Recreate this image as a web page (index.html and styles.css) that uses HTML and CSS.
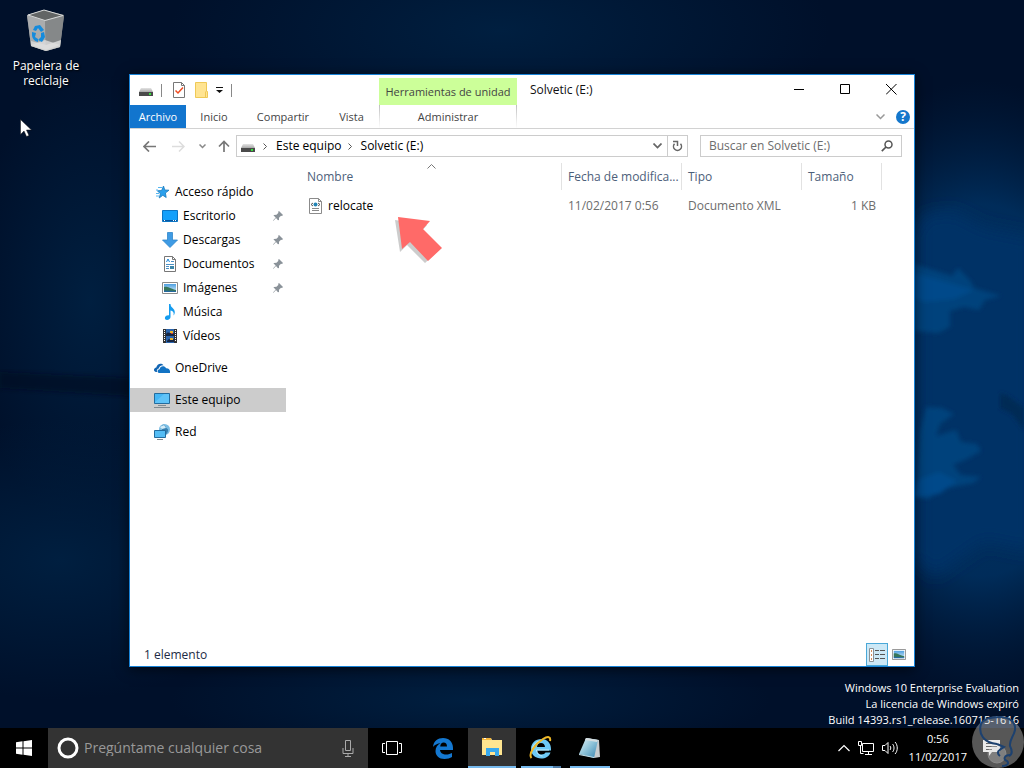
FILE: index.html
```html
<!DOCTYPE html>
<html lang="es">
<head>
<meta charset="utf-8">
<meta name="viewport" content="width=device-width, initial-scale=1">
<title>Solvetic (E:)</title>
<link rel="stylesheet" href="styles.css">
</head>
<body>
<svg class="defs" aria-hidden="true">
  <defs>
    <linearGradient id="driveTop" x1="0" y1="0" x2="0" y2="1"><stop offset="0" stop-color="#e4e4e4"/><stop offset="1" stop-color="#a9a9a9"/></linearGradient>
    <linearGradient id="sky" x1="0" y1="0" x2="0" y2="1"><stop offset="0" stop-color="#4d9fe0"/><stop offset="1" stop-color="#d9eef9"/></linearGradient>
    <symbol id="drive" viewBox="0 0 14 8"><path d="M2 0h10l2 4H0z" fill="url(#driveTop)"/><path d="M0 4h14v4H0z" fill="#4a4a4a"/><path d="M10 5h2v2h-2z" fill="#35e03c"/></symbol>
    <symbol id="pin" viewBox="0 0 10 10"><path d="M6 0l4 4-1 1-1-.3-2 2L6 9 5 9.300 3 7 .5 9.800 0 9.500 2.700 6.500.5 4.500 1 4l2.500-.3 2-2L5 1z" fill="#8a9299"/></symbol>
    <symbol id="photo" viewBox="0 0 16 12"><path d="M.5.500h15v11H.5z" fill="#fff" stroke="#8a8a8a"/><path d="M2 2h12v8H2z" fill="url(#sky)"/><path d="M2 5c3-1 5 1 12 3v1H2z" fill="#37765a"/><path d="M2 8.500l12 .5V10H2z" fill="#2469a0"/></symbol>
  </defs>
</svg>
<main class="desktop">
  <svg class="wallpaper" viewBox="0 0 1024 728" preserveAspectRatio="none" aria-hidden="true">
    <defs>
      <radialGradient id="glow"><stop offset="0" stop-color="#003366"/><stop offset=".6" stop-color="#003162" stop-opacity=".85"/><stop offset="1" stop-color="#002044" stop-opacity="0"/></radialGradient>
      <radialGradient id="haze"><stop offset="0" stop-color="#001f40"/><stop offset="1" stop-color="#001f40" stop-opacity="0"/></radialGradient>
      <filter id="soft"><feGaussianBlur stdDeviation="2"/></filter>
      <filter id="edge"><feGaussianBlur stdDeviation="8"/></filter>
    </defs>
    <path d="M0 0h1024v728H0z" fill="#00102a"/>
    <ellipse cx="500" cy="30" rx="330" ry="120" fill="url(#haze)"/>
    <ellipse cx="90" cy="300" rx="120" ry="230" fill="url(#haze)"/>
    <ellipse cx="60" cy="560" rx="220" ry="140" fill="url(#haze)"/>
    <ellipse cx="470" cy="700" rx="300" ry="60" fill="url(#haze)"/>
    <path d="M0 372l130 6v18L0 388z" fill="#000b20" filter="url(#soft)" opacity=".6"/>
    <ellipse cx="980" cy="390" rx="190" ry="310" fill="url(#glow)"/>
    <path d="M914 235l10-20 30-4 30 16 50 10v315l-50-10-50 35-20-20z" fill="#003366" filter="url(#edge)"/>
    <g filter="url(#soft)">
      <path d="M914 264l38 12 6-8 12 12 4 8 27 8-16 4-6 10-15-3-14 4v16l-12 6-24-2-1-32z" fill="#00437c"/>
      <path d="M914 273l60 17-20 9-30 3-10-4z" fill="#004a8a"/>
      <path d="M920 432l6-25 16 1 12 6-14 10-4 12 20-6 5 12 16 2 4 7-14 8-14 6 8 10 20 2-8 6-30 6-15 10-12-2z" fill="#00437c"/>
      <path d="M917 480l22-8 18 9-18 13-25 3z" fill="#004a8a"/>
    </g>
    <path d="M1000 393l8 3 16 12v22l-12-16-12-6z" fill="#002a55" filter="url(#soft)"/>
  </svg>

  <a class="bin" href="#papelera">
    <svg width="40" height="44" viewBox="0 0 40 44" aria-hidden="true">
      <path d="M1 6l17-5 20 5-4 32-14 4-15-5z" fill="#8e9091"/>
      <path d="M1 6l18 6 1 30-15-5z" fill="#aaacad"/>
      <path d="M19 12l19-5-4 31-14 4z" fill="#858889"/>
      <path d="M2 6l16-5 19 5.500-18 5z" fill="#626565" stroke="#d7d9d9"/>
      <path d="M5 32l15 4v6L5 37zM20 36l15-5-1 7-14 4z" fill="#d0d1d1"/>
      <path d="M5 36l14-5 15 5-14 5z" fill="#dedede" opacity=".8"/>
      <path d="M9 17l5-1 4 5-3 2-3-4-2 3-3-1zM6 23l4 1-1 4 3 2v3c-4-1-6-4-6-7zM15 24l3-1 1 5-3 5-4-2 3-3z" fill="#168bdc"/>
    </svg>
    <span>Papelera de reciclaje</span>
  </a>
  <svg class="pointer" width="12" height="18" viewBox="0 0 12 18" aria-hidden="true"><path d="M.5.500v15l3.500-3.500 2.500 5.500 2.500-1-2.500-5.500h5z" fill="#fff" stroke="#111" stroke-width=".5"/></svg>

  <section class="window" aria-label="Solvetic (E:)">
    <header class="titlebar">
      <div class="quick">
        <svg width="14" height="8" aria-hidden="true"><use href="#drive"/></svg>
        <i class="rule"></i>
        <button aria-label="Propiedades"><svg width="12" height="16" viewBox="0 0 12 16"><path d="M.5.500h8l3 3v12H.5z" fill="#fff" stroke="#777"/><path d="M8.500.5v3h3" fill="none" stroke="#777"/><path d="M2.500 8.500L5 11l5-5.500" fill="none" stroke="#ef4b20" stroke-width="1.500"/></svg></button>
        <button aria-label="Nueva carpeta"><svg width="13" height="16" viewBox="0 0 13 16"><path d="M.5.500h11v9h1v6H.5z" fill="#ffe492" stroke="#efc956"/><path d="M10.500 15V9.500" stroke="#efc956"/></svg></button>
        <button aria-label="Personalizar"><svg width="7" height="6" viewBox="0 0 7 6"><path d="M0 0h7v1H0zM0 3h7L3.500 6z" fill="#111"/></svg></button>
        <i class="rule"></i>
      </div>
      <div class="context">Herramientas de unidad</div>
      <h1>Solvetic (E:)</h1>
      <div class="controls">
        <button aria-label="Minimizar"><svg width="11" height="11" viewBox="0 0 11 11"><path d="M0 5.500h10" stroke="#000"/></svg></button>
        <button aria-label="Maximizar"><svg width="11" height="11" viewBox="0 0 11 11"><path d="M.5.500h9v9h-9z" fill="none" stroke="#000"/></svg></button>
        <button aria-label="Cerrar"><svg width="11" height="11" viewBox="0 0 11 11"><path d="M0 0l10.500 10.500M10.500 0L0 10.500" stroke="#000"/></svg></button>
      </div>
    </header>

    <nav class="tabs" aria-label="Cinta">
      <button class="file">Archivo</button>
      <button>Inicio</button>
      <button>Compartir</button>
      <button>Vista</button>
      <button class="manage">Administrar</button>
      <div class="help">
        <button aria-label="Expandir la cinta"><svg width="9" height="6" viewBox="0 0 9 6"><path d="M.5.500l4 4 4-4" fill="none" stroke="#999" stroke-width="1.500"/></svg></button>
        <button class="round" aria-label="Ayuda">?</button>
      </div>
    </nav>

    <div class="location">
      <div class="arrows">
        <button aria-label="Atrás"><svg width="13" height="11" viewBox="0 0 13 11"><path d="M13 5.500H1.500M6 .5l-5 5 5 5" fill="none" stroke="#777" stroke-width="1.700"/></svg></button>
        <button aria-label="Adelante"><svg width="13" height="11" viewBox="0 0 13 11"><path d="M0 5.500h11.500M7 .5l5 5-5 5" fill="none" stroke="#ddd" stroke-width="1.500"/></svg></button>
        <button aria-label="Recientes"><svg width="7" height="5" viewBox="0 0 7 5"><path d="M.5.500l3 3 3-3" fill="none" stroke="#888" stroke-width="1.500"/></svg></button>
        <button aria-label="Subir"><svg width="12" height="12" viewBox="0 0 12 12"><path d="M6 12V1.500M1 6.500l5-5 5 5" fill="none" stroke="#777" stroke-width="1.700"/></svg></button>
      </div>
      <div class="address">
        <svg width="14" height="8" aria-hidden="true"><use href="#drive"/></svg>
        <svg class="sep" width="4" height="7" viewBox="0 0 4 7"><path d="M.5.500l3 3-3 3" fill="none" stroke="#555"/></svg>
        <a href="#equipo">Este equipo</a>
        <svg class="sep" width="4" height="7" viewBox="0 0 4 7"><path d="M.5.500l3 3-3 3" fill="none" stroke="#555"/></svg>
        <a href="#e">Solvetic (E:)</a>
        <button class="drop" aria-label="Ubicaciones anteriores"><svg width="9" height="6" viewBox="0 0 9 6"><path d="M.5.500l4 4 4-4" fill="none" stroke="#666" stroke-width="1.700"/></svg></button>
        <button class="reload" aria-label="Actualizar"><svg width="11" height="12" viewBox="0 0 11 12"><path d="M8.500 3.800A4 4 0 1 1 2.500 3.800" fill="none" stroke="#666" stroke-width="1.500"/><path d="M1 1.500h4.500V6" fill="none" stroke="#666" stroke-width="1.500"/></svg></button>
      </div>
      <label class="search">
        <input type="search" aria-label="Buscar" placeholder="Buscar en Solvetic (E:)">
        <svg width="12" height="12" viewBox="0 0 12 12" aria-hidden="true"><circle cx="7.500" cy="4.500" r="3.500" fill="none" stroke="#555" stroke-width="1.500"/><path d="M5 7L.8 11.200" stroke="#555" stroke-width="1.700"/></svg>
      </label>
    </div>

    <div class="content">
      <nav class="tree" aria-label="Panel de navegación">
        <a href="#rapido"><svg width="16" height="16" viewBox="0 0 16 16"><path d="M9.500 2l1.300 4 4.200.2-3.600 2.800.8 4.500-3.400-2.200-3.600 2.700 1.200-4.200-3-3 4.200-.3z" fill="#2ba0ec" stroke="#1679bd" stroke-width=".8"/><path d="M4 3.500h4M2 6h2M2 9.500h3M2 12h3" stroke="#54b6f0"/></svg>Acceso rápido</a>
        <ul>
          <li><a href="#escritorio"><svg width="16" height="16" viewBox="0 0 16 16"><path d="M.5 2.500h15v11H.5z" fill="#14a0fb" stroke="#0c75c4"/><path d="M1 12.500h14" stroke="#0756a0"/><path d="M2 12.500h1M11 12.500h1M13 12.500h1" stroke="#fff"/></svg>Escritorio</a><svg class="pin"><use href="#pin"/></svg></li>
          <li><a href="#descargas"><svg width="16" height="16" viewBox="0 0 16 16"><path d="M5.500.500h5v7.500h5L8 15.500.5 8h5z" fill="#3f9be4" stroke="#2f86cb" stroke-width=".8"/></svg>Descargas</a><svg class="pin"><use href="#pin"/></svg></li>
          <li><a href="#documentos"><svg width="16" height="16" viewBox="0 0 16 16"><path d="M2.500.500h8l3 3v12h-11z" fill="#fff" stroke="#777"/><path d="M10.500.5v3h3" fill="none" stroke="#777"/><path d="M4.500 6l1.500-3 1.500 3" fill="none" stroke="#1684d8"/><path d="M9 5.500h3M4 8.500h8M4 10.500h3M4 12.500h3" stroke="#4b90c5"/><path d="M8 10h4v3H8z" fill="#3c86a8"/></svg>Documentos</a><svg class="pin"><use href="#pin"/></svg></li>
          <li><a href="#imagenes"><svg width="16" height="12"><use href="#photo"/></svg>Imágenes</a><svg class="pin"><use href="#pin"/></svg></li>
          <li><a href="#musica"><svg width="16" height="16" viewBox="0 0 16 16"><path d="M7 0h1.500c0 4 4.500 4 4.300 8.500-.2 1.500-.8 2.500-1.300 3 .8-3-.5-4.500-3-5V13c0 1.600-1.600 3-3.400 3C3.500 16 2.500 15 3 13.300 3.500 12 5.500 11 7 11.500z" fill="#159cef"/></svg>Música</a></li>
          <li><a href="#videos"><svg width="16" height="16" viewBox="0 0 16 16"><path d="M1 1h14v14H1z" fill="#333"/><path d="M4 1h8v14H4z" fill="#2d66ad"/><path d="M4 6c3-4 4 1 8-1v3H4zM5 13c2-4 4 0 7-2v3H5z" fill="#162744"/><path d="M8 3h3v2H8zM8 10h3v2H8z" fill="#ecb52b"/><path d="M9 5h2v1H9z" fill="#ce3c2a"/><path d="M2.500 2v12M13.500 2v12" stroke="#fff" stroke-dasharray="1 1"/></svg>Vídeos</a></li>
        </ul>
        <a href="#onedrive"><svg width="16" height="16" viewBox="0 0 16 16"><path d="M2 12C-1 11.500-.5 8 2.300 7.500 3 4 7 2.500 9.500 5.200 6.500 5 5 7 4.800 8.500 2.800 9 2.500 10.800 3.200 12z" fill="#1265b3"/><path d="M5 13c-2-.5-2-3.300.6-3.700C6 6 10.500 5 12 8.300c3-.3 4.500 2 4 4.700z" fill="#1273c4"/></svg>OneDrive</a>
        <a class="selected" href="#equipo"><svg width="16" height="16" viewBox="0 0 16 16"><path d="M.5 1.500h15v10H.5z" fill="#45b6f4" stroke="#236c9e"/><path d="M1 10l9-8h5v9H1z" fill="#71cbfa" opacity=".6"/><path d="M4 13.500h8M0 15.500h16" stroke="#808a90"/></svg>Este equipo</a>
        <a href="#red"><svg width="16" height="16" viewBox="0 0 16 16"><circle cx="10.500" cy="5.500" r="5.500" fill="#7abde4"/><path d="M9 .5c3 1 2 3 4 4s1 4-1 6l-3-4c-2-1-1-4 0-6z" fill="#357fb0"/><path d="M6 3l4-2 2 3-4 1z" fill="#d5edf8"/><path d="M.5 6.500h11v7H.5z" fill="#54bdf5" stroke="#236c9e"/><path d="M3 15.500h6" stroke="#808a90"/></svg>Red</a>
      </nav>

      <div class="files">
        <table>
          <colgroup><col class="c-name"><col class="c-date"><col class="c-type"><col class="c-size"></colgroup>
          <thead><tr>
            <th scope="col">Nombre<svg class="sort" width="9" height="5" viewBox="0 0 9 5"><path d="M.5 4.500l4-4 4 4" fill="none" stroke="#777"/></svg></th>
            <th scope="col">Fecha de modifica...</th><th scope="col">Tipo</th><th scope="col">Tamaño</th>
          </tr></thead>
          <tbody><tr>
            <td><span class="name"><svg width="16" height="16" viewBox="0 0 16 16"><path d="M2.500.500h9l3 3v12h-12z" fill="#fff" stroke="#8b8b8b"/><path d="M11.500.5v3h3" fill="none" stroke="#8b8b8b"/><path d="M6 5L4 6.500 6 8M11 5l2 1.500L11 8" fill="none" stroke="#555"/><circle cx="8.500" cy="6.500" r="2" fill="#2384b5"/><path d="M5 10.500h7M5 12.500h7" stroke="#888"/></svg>relocate</span></td>
            <td>11/02/2017 0:56</td><td>Documento XML</td><td class="size">1 KB</td>
          </tr></tbody>
        </table>
        <svg class="callout" width="50" height="52" viewBox="0 0 50 52" aria-hidden="true"><path d="M4 3l32 5-7 8 18 18-13 12-18-18-7 7z" fill="#999" opacity=".5" transform="translate(-3 3)"/><path d="M4 3l32 4-7 8 19 19-14 13-18-19-8 7z" fill="#ff6a68"/></svg>
      </div>
    </div>

    <footer class="status">
      <span>1 elemento</span>
      <div class="views">
        <button class="active" aria-label="Detalles"><svg width="16" height="14" viewBox="0 0 16 14"><path d="M.5.500h4v13h-4z" fill="#fff" stroke="#8a9297"/><path d="M2 3h1M2 7h1M2 11h1" stroke="#c56724" stroke-width="1.500"/><path d="M6 2.500h4M11 2.500h5M6 6.500h4M11 6.500h5M6 10.500h4M11 10.500h5" stroke="#555"/></svg></button>
        <button aria-label="Iconos grandes"><svg width="14" height="11" viewBox="0 0 16 12" preserveAspectRatio="none"><use href="#photo"/></svg></button>
      </div>
    </footer>
  </section>

  <p class="build">Windows 10 Enterprise Evaluation<br>La licencia de Windows expiró<br>Build 14393.rs1_release.160715-1616</p>
</main>

<footer class="taskbar">
  <button class="task" aria-label="Inicio"><svg width="16" height="16" viewBox="0 0 16 16"><path d="M0 2.300L6.500 1.300v6.200H0zM7.500 1.200L16 0v7.500H7.500zM0 8.500h6.500v6.200L0 13.700zM7.500 8.500H16V16l-8.500-1.200z" fill="#fff"/></svg></button>
  <label class="cortana">
    <svg width="22" height="22" viewBox="0 0 22 22" aria-hidden="true"><circle cx="11" cy="11" r="9" fill="none" stroke="#fff" stroke-width="3"/></svg>
    <input type="text" aria-label="Cortana" placeholder="Pregúntame cualquier cosa">
    <svg width="12" height="17" viewBox="0 0 12 17" aria-hidden="true"><path d="M3.500.500h5v10h-5zM1 8v5.500h10V8M6 13.500v3M3 16.500h6" fill="none" stroke="#aaa"/></svg>
  </label>
  <div class="apps">
    <button class="task" aria-label="Vista de tareas"><svg width="20" height="14" viewBox="0 0 20 14"><path d="M4.500.500h11v13h-11zM3 2.500H.5v9H3M17 2.500h2.500v9H17" fill="none" stroke="#fff"/></svg></button>
    <button class="task edge" aria-label="Microsoft Edge"><svg width="22" height="22" viewBox="0 0 22 22"><path d="M1 10C1.500 4 6 1 11 1c6 0 10 4 10 10v2H8c.3 3 3 4.500 6 4.500 2.500 0 4.500-.7 6-1.500v4c-2 1.300-4.500 2-7.500 2C7 22 3.500 18.500 3.500 14c0-3.500 2-6.500 5-8C4.500 6.500 2 8.500 1 10zM8.200 9.500H15C15 7 13.700 5.500 11.700 5.500S8.500 7 8.200 9.500z" fill="#1478d1"/></svg></button>
    <button class="task current" aria-label="Explorador"><svg width="22" height="20" viewBox="0 0 22 20"><path d="M1 1h9l1 2h10v15H1z" fill="#ffe590"/><path d="M1 1h9v2H1z" fill="#f5b73c"/><path d="M3 1h2v1H3z" fill="#fff"/><path d="M5 19v-8h13v8h-4v-4H9v4z" fill="#38a9ee"/></svg></button>
    <button class="task open split" aria-label="Internet Explorer"><svg width="24" height="24" viewBox="0 0 24 24"><path d="M2 13C2 7 6.500 3 12.500 3S22 7.500 22 13v1.500H8c.3 2.500 2 4 4.500 4 2 0 3.300-1 4-2h5c-1.500 4-5 6-9.200 6C6.500 22.500 2 18.800 2 13zM8 11h8c-.2-2.500-1.700-4-4-4s-3.700 1.500-4 4z" fill="#6dc9f5"/><path d="M3.500 13C4 8 8 5 12 5M20 14H7.500c.5 4 3 6 6 6" fill="none" stroke="#c4eefd"/><path d="M2.500 22C-1 18 6 8 14 3c5-3 8-2.500 7 2" fill="none" stroke="#f0b928" stroke-width="2"/></svg></button>
    <button class="task open" aria-label="Bloc de notas"><svg width="24" height="22" viewBox="0 0 24 22"><defs><linearGradient id="pad" x2="1" y2="1"><stop offset="0" stop-color="#e7f7fb"/><stop offset=".5" stop-color="#8dc2d8"/><stop offset="1" stop-color="#3984b0"/></linearGradient></defs><path d="M9 1l12 2 1 17-6 1z" fill="#c8cccf"/><path d="M8 1l12 2-4 18L1 17z" fill="url(#pad)"/><path d="M8 1l12 2-1 2L7 3z" fill="#d5dde0"/><path d="M1 17l15 3v1L1 18z" fill="#c7e2eb"/></svg></button>
  </div>
  <div class="tray">
    <button aria-label="Mostrar iconos ocultos"><svg width="12" height="8" viewBox="0 0 12 8"><path d="M.5 7L6 1.500 11.500 7" fill="none" stroke="#fff" stroke-width="1.200"/></svg></button>
    <button aria-label="Red"><svg width="16" height="14" viewBox="0 0 16 14"><path d="M4.500 2.500h11v8h-11zM7 13.500h7M10.500 10.500v3M.5.500h3v4h-3zM2.500 4.500v8h3" fill="none" stroke="#fff"/></svg></button>
    <button aria-label="Volumen"><svg width="17" height="14" viewBox="0 0 17 14"><path d="M.5 4.500H3l3-3v11l-3-3H.5zM8 5c1 1 1 3 0 4M10.500 3c2 2 2 6 0 8M13 1c3 3 3 9 0 12" fill="none" stroke="#fff"/></svg></button>
    <time>0:56<br>11/02/2017</time>
    <button class="notes" aria-label="Notificaciones"><svg width="17" height="16" viewBox="0 0 17 16"><path d="M0 0h17v12H9l-3 4v-4H0z" fill="#fff"/><path d="M3 3.500h11M3 6.500h11M3 9.500h6" stroke="#222"/></svg></button>
  </div>
</footer>
<svg class="bulb" width="54" height="54" viewBox="0 0 54 54" aria-hidden="true"><circle cx="28" cy="28" r="26" fill="#cfcfcf" opacity=".42"/><circle cx="27" cy="40" r="9" fill="#ddd" opacity=".3" stroke="#fff"/><path d="M27 30C14 29 8 20 11 10 14 4 22 3 30 3c9 0 16 5 15 13-1 6-6 10-5 16 2 4 3 8-1 10M27 30l7 3-6 4M34 33c-6 3-8 6-4 9M40 41c-6 0-7 5-3 6 3 3-1 5-5 5" fill="none" stroke="#1d416f" stroke-width="2"/></svg>
</body>
</html>
```
FILE: styles.css
```css
* { box-sizing: border-box; }
body {
  margin: 0;
  min-height: 100vh;
  display: grid;
  grid-template-rows: 1fr auto;
  background: #00102a;
  color: #111;
  font: 12px/16px "Open Sans", "Noto Sans", sans-serif;
}
button, input { font: inherit; color: inherit; margin: 0; padding: 0; border: 0; background: none; }
a { color: inherit; text-decoration: none; }
svg { display: block; flex: none; }
.defs { position: absolute; width: 0; height: 0; }

.desktop { position: relative; min-height: 640px; overflow: hidden; }
.wallpaper { position: absolute; inset: 0; width: 100%; height: 100%; }
.bin {
  position: absolute; left: 6px; top: 9px; width: 80px;
  display: flex; flex-direction: column; align-items: center; gap: 5px;
  color: #fff; text-align: center; line-height: 15px;
  text-shadow: 1px 1px 2px #000;
}
.pointer { position: absolute; left: 20px; top: 119px; }
.build {
  position: absolute; right: 5px; bottom: 0; margin: 0;
  color: #fff; text-align: right; font-size: 11px; line-height: 16px;
}

.window {
  position: absolute; left: 129px; top: 74px; right: 109px; bottom: 61px;
  display: flex; flex-direction: column;
  background: #fff; border: 1px solid #1883d7;
  box-shadow: 0 2px 12px rgba(0, 0, 0, .6);
}
.titlebar { display: flex; height: 30px; }
.quick { width: 249px; padding-left: 9px; display: flex; align-items: center; }
.quick > svg { margin-top: 4px; }
.quick .rule { width: 1px; height: 13px; margin: 0 11px 0 8px; background: #888; }
.quick button { margin-right: 10px; }
.quick button:nth-of-type(3) { margin: 0 8px 0 -2px; }
.quick button + .rule { margin-left: 0; }
.context {
  width: 138px; margin-top: 3px;
  background: #ccff99; color: #444; text-align: center; font-size: 11px; line-height: 27px;
}
h1 { flex: 1; margin: 0 0 0 13px; font-size: 12px; font-weight: 400; line-height: 30px; }
.controls { display: flex; }
.controls button { width: 46px; height: 29px; display: grid; place-items: center; }

.tabs {
  display: grid; grid-template-columns: 56px 56px 82px 55px 138px 1fr;
  height: 24px; border-bottom: 1px solid #d2d2d2; color: #444; font-size: 11px;
}
.file { background: #1275ce; color: #fff; }
.manage {
  border: solid; border-width: 0 1px;
  border-image: linear-gradient(#bbb, #eee 70%, #fff) 1;
}
.help { display: flex; justify-content: flex-end; align-items: center; gap: 11px; padding-right: 4px; }
.round { width: 14px; height: 14px; border-radius: 50%; background: #1477cc; color: #fff; font-size: 12px; font-weight: 700; line-height: 14px; }

.location { display: flex; height: 34px; padding: 6px 12px 6px 13px; }
.arrows { width: 93px; display: flex; align-items: center; gap: 16px; }
.arrows button:nth-child(3) { margin: 0 -4px 0 -2px; }
.address { flex: 1; display: flex; align-items: center; border: 1px solid #ccc; padding-left: 4px; color: #000; }
.address > svg:first-child { margin-top: 4px; }
.address .sep { margin: 0 9px 0 8px; }
.address a + .sep { margin: 0 9px 0 6px; }
.drop { margin-left: auto; padding: 0 5px; }
.reload { width: 20px; align-self: stretch; display: grid; place-items: center; border-left: 1px solid #ccc; }
.search { width: 202px; margin-left: 12px; display: flex; align-items: center; border: 1px solid #ccc; padding: 0 8px; }
.search input { flex: 1; min-width: 0; outline: 0; }
.search input::placeholder { color: #6d6d6d; opacity: 1; }

.content { flex: 1; display: flex; min-height: 0; }
.tree { width: 156px; padding-top: 17px; color: #000; }
.tree a { display: flex; align-items: center; gap: 5px; height: 24px; padding-left: 24px; }
.tree ul { list-style: none; margin: 0; padding: 0; }
.tree li { display: flex; align-items: center; }
.tree li a { flex: 1; padding-left: 32px; }
.tree ul ~ a { margin-top: 8px; }
.tree .selected { background: #ccc; }
.pin { width: 10px; height: 10px; margin-right: 3px; }

.files { position: relative; flex: 1; padding-left: 15px; }
table { border-collapse: separate; border-spacing: 0; table-layout: fixed; width: 581px; }
.c-name { width: 261px; }
.c-date, .c-type { width: 120px; }
.c-size { width: 80px; }
th, td { padding: 0 6px; text-align: left; font-weight: 400; white-space: nowrap; }
th { position: relative; height: 27px; padding-top: 1px; border-right: 1px solid #e2e2e2; color: #4c607a; }
td { height: 32px; color: #6d6d6d; }
.sort { position: absolute; left: 126px; top: 1px; }
.name { display: flex; align-items: center; gap: 5px; color: #000; }
.size { text-align: right; }
.callout { position: absolute; left: 108px; top: 51px; }

.status { display: flex; justify-content: space-between; align-items: center; height: 23px; padding: 0 4px 0 14px; color: #222b45; }
.views { display: flex; align-self: stretch; }
.views button { width: 22px; display: grid; place-items: center; }
.views .active { background: #cce8f6; border: 1px solid #4aa8d8; }

.taskbar { display: flex; height: 40px; background: #000; color: #fff; }
.task { width: 48px; display: grid; place-items: center; flex: none; }
.apps { display: flex; gap: 1px; }
.edge { margin-left: 2px; }
.current { background: #333; border-bottom: 2px solid #76b9ed; }
.open { background: linear-gradient(#76b9ed, #76b9ed) 50% 100% / 40px 2px no-repeat; }
.split { background: linear-gradient(90deg, #76b9ed 32px, #4e7ba6 32px) 50% 100% / 40px 2px no-repeat; }
.cortana { width: 320px; padding: 0 14px 0 9px; display: flex; align-items: center; gap: 5px; background: #333; }
.cortana input { flex: 1; min-width: 0; outline: 0; font-size: 14px; }
.cortana input::placeholder { color: #999; opacity: 1; }
.tray { margin-left: auto; display: flex; align-items: center; gap: 8px; padding-right: 24px; }
.tray time { font-size: 11px; line-height: 18px; text-align: center; }
.tray time { margin-left: 2px; }
.notes { margin-left: 8px; }
.bulb { position: absolute; right: 0; bottom: 0; pointer-events: none; }
```
